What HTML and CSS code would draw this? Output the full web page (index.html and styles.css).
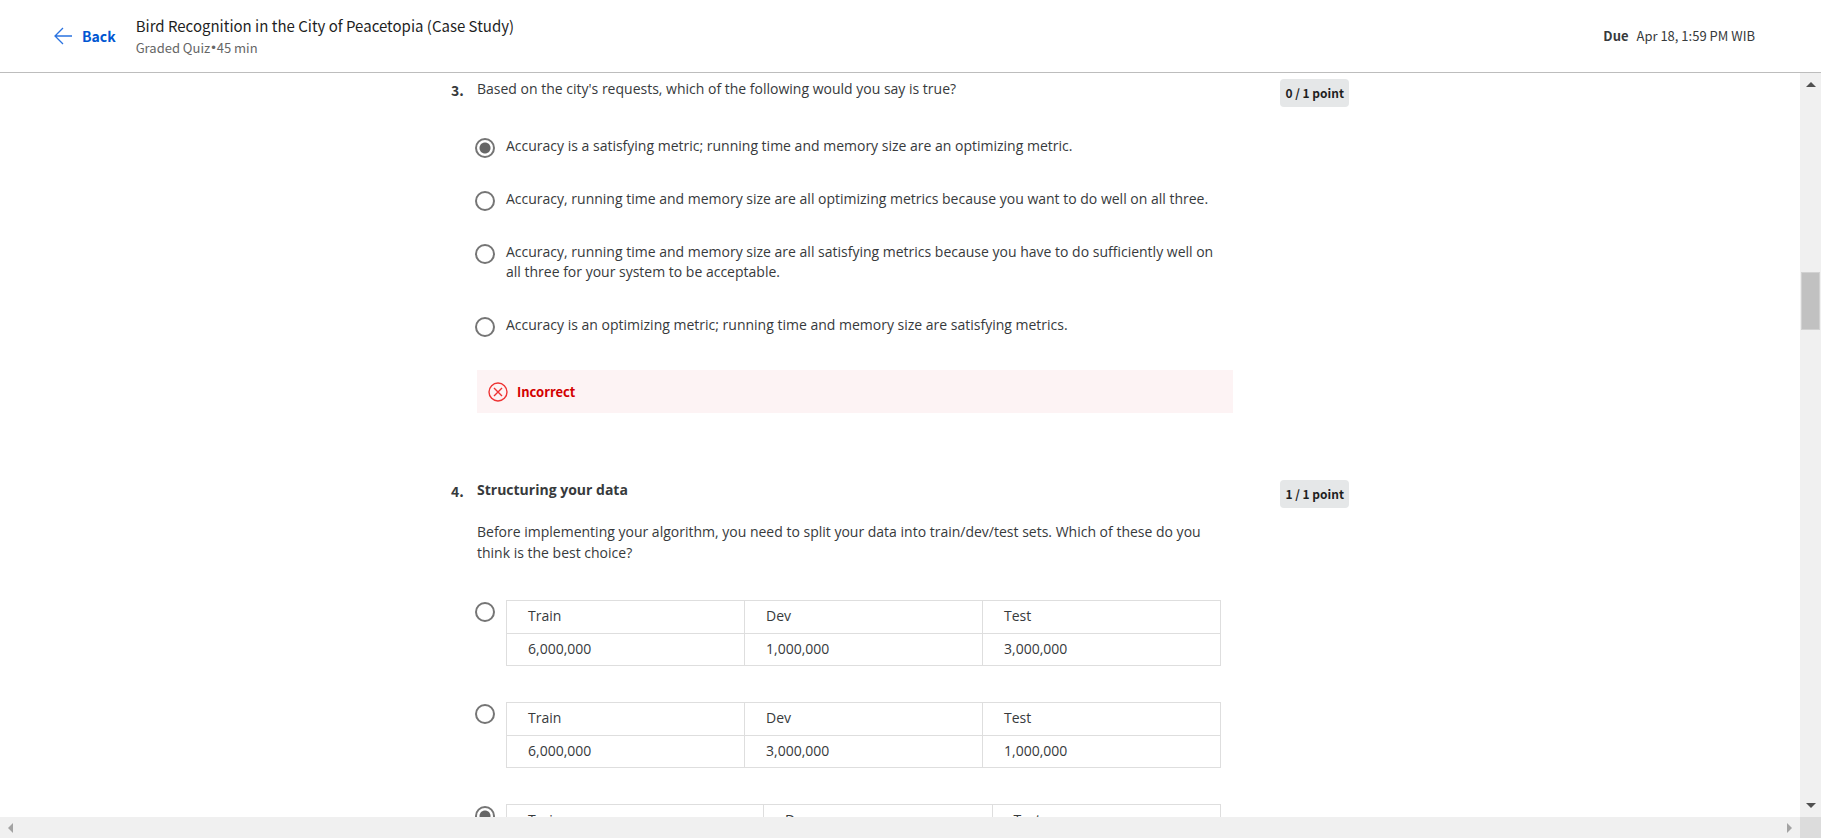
FILE: index.html
```html
<!DOCTYPE html>
<html lang="en">
<head>
<meta charset="utf-8">
<title>Bird Recognition in the City of Peacetopia (Case Study)</title>
<link rel="stylesheet" href="styles.css">
</head>
<body>
<header class="header">
  <a class="back" href="#">
    <svg class="back-icon" viewBox="0 0 18 18" aria-hidden="true"><path d="M18 9H1M9 1L1 9l8 8"/></svg>
    <span>Back</span>
  </a>
  <div class="heading">
    <h1 class="title">Bird Recognition in the City of Peacetopia (Case Study)</h1>
    <p class="subtitle"><span>Graded Quiz</span><span class="bullet">•</span><span>45 min</span></p>
  </div>
  <p class="due"><strong>Due</strong><span>Apr 18, 1:59 PM WIB</span></p>
</header>
<div class="viewport">
  <main class="page">
    <div class="quiz">
      <section class="question">
        <span class="number">3.</span>
        <div class="body">
          <p class="prompt">Based on the city's requests, which of the following would you say is true?</p>
          <div class="options">
            <label class="option"><input class="radio" type="radio" name="q3" checked><span>Accuracy is a satisfying metric; running time and memory size are an optimizing metric.</span></label>
            <label class="option"><input class="radio" type="radio" name="q3"><span>Accuracy, running time and memory size are all optimizing metrics because you want to do well on all three.</span></label>
            <label class="option"><input class="radio" type="radio" name="q3"><span>Accuracy, running time and memory size are all satisfying metrics because you have to do sufficiently well on all three for your system to be acceptable.</span></label>
            <label class="option"><input class="radio" type="radio" name="q3"><span>Accuracy is an optimizing metric; running time and memory size are satisfying metrics.</span></label>
          </div>
          <div class="feedback">
            <svg class="feedback-icon" viewBox="0 0 20 20" aria-hidden="true"><circle cx="10" cy="10" r="9"/><path d="M6 6l8 8M14 6l-8 8"/></svg>
            <strong>Incorrect</strong>
          </div>
        </div>
        <span class="points">0 / 1 point</span>
      </section>
      <section class="question">
        <span class="number">4.</span>
        <div class="body">
          <h2 class="prompt prompt-title">Structuring your data</h2>
          <p class="prompt">Before implementing your algorithm, you need to split your data into train/dev/test sets. Which of these do you think is the best choice?</p>
          <div class="options options-tables">
            <div class="option">
              <input class="radio" type="radio" name="q4" aria-labelledby="split-a">
              <table class="split" id="split-a">
                <tr><td>Train</td><td>Dev</td><td>Test</td></tr>
                <tr><td>6,000,000</td><td>1,000,000</td><td>3,000,000</td></tr>
              </table>
            </div>
            <div class="option">
              <input class="radio" type="radio" name="q4" aria-labelledby="split-b">
              <table class="split" id="split-b">
                <tr><td>Train</td><td>Dev</td><td>Test</td></tr>
                <tr><td>6,000,000</td><td>3,000,000</td><td>1,000,000</td></tr>
              </table>
            </div>
            <div class="option">
              <input class="radio" type="radio" name="q4" aria-labelledby="split-c" checked>
              <table class="split split-wide" id="split-c">
                <tr><td>Train</td><td>Dev</td><td>Test</td></tr>
              </table>
            </div>
          </div>
        </div>
        <span class="points">1 / 1 point</span>
      </section>
    </div>
  </main>
  <div class="bar bar-vertical">
    <svg class="arrow" viewBox="0 0 10 10" aria-hidden="true"><path d="M0 8l5-5 5 5z"/></svg>
    <div class="track"><div class="thumb"></div></div>
    <svg class="arrow" viewBox="0 0 10 10" aria-hidden="true"><path d="M0 2l5 5 5-5z"/></svg>
  </div>
  <div class="bar bar-horizontal">
    <svg class="arrow" viewBox="0 0 10 10" aria-hidden="true"><path d="M7 0L2 5l5 5z"/></svg>
    <svg class="arrow" viewBox="0 0 10 10" aria-hidden="true"><path d="M3 0l5 5-5 5z"/></svg>
  </div>
  <div class="corner"></div>
</div>
</body>
</html>
```
FILE: styles.css
```css
* { box-sizing: border-box; }
body {
  margin: 0;
  height: 100vh;
  display: flex;
  flex-direction: column;
  overflow: hidden;
  background: #fff;
  color: #373a3c;
  font: 14px/20px "Open Sans", sans-serif;
}
h1, h2, p { margin: 0; }

.header {
  flex: none;
  display: flex;
  align-items: center;
  height: 73px;
  padding: 0 66px 0 54px;
  border-bottom: 1px solid #bdbdbd;
  font-family: "Noto Sans CJK SC", sans-serif;
}
.back {
  display: flex;
  align-items: center;
  gap: 10px;
  color: #0056d2;
  font-size: 14px;
  font-weight: 700;
  text-decoration: none;
}
.back-icon { width: 18px; height: 18px; fill: none; stroke: #2a73e0; stroke-width: 1.3; }
.heading { flex: 1; margin-left: 20px; }
.title { font-size: 15px; line-height: 23px; font-weight: 400; color: #1f1f1f; }
.subtitle { display: flex; gap: 1px; font-size: 13px; line-height: 21px; color: #666; }
.bullet { font-family: "Liberation Sans", sans-serif; }
.due { display: flex; gap: 8px; font-size: 13px; color: #373a3c; }

.viewport {
  flex: 1;
  min-height: 0;
  display: grid;
  grid-template-columns: 1fr 21px;
  grid-template-rows: 1fr 21px;
}
.page { min-height: 0; overflow: hidden; padding: 5px 16px 0; }
.quiz { display: flex; flex-direction: column; gap: 66px; max-width: 898px; margin: 0 auto; }
.question { display: flex; align-items: flex-start; }
.number {
  width: 26px;
  padding-top: 2px;
  font-family: "Noto Sans CJK SC", sans-serif;
  font-size: 14px;
  font-weight: 700;
}
.body { width: 756px; }
.points {
  margin: 1px 0 0 auto;
  padding: 3px 5px;
  border-radius: 4px;
  background: #e5e7e8;
  color: #1f1f1f;
  font: 700 12px/22px "Noto Sans CJK SC", sans-serif;
}
.prompt { color: #373a3c; line-height: 21px; }
.prompt-title { margin-bottom: 21px; font-size: 14px; }
.options { display: flex; flex-direction: column; gap: 33px; padding: 37px 12px 0 0; }
.options-tables { gap: 36px; }
.option { display: flex; align-items: flex-start; gap: 11px; }
.radio {
  appearance: none;
  flex: none;
  width: 20px;
  height: 20px;
  margin: 2px 0 -2px -2px;
  border: 2px solid #757575;
  border-radius: 50%;
  background: #fff;
}
.radio:checked { background: radial-gradient(circle, #666 5px, #fff 6px); }
.feedback {
  display: flex;
  align-items: center;
  gap: 9px;
  height: 43px;
  margin-top: 35px;
  padding: 0 12px 0 11px;
  background: #fdf3f4;
  color: #d30001;
  font-family: "Noto Sans CJK SC", sans-serif;
  font-size: 13px;
}
.feedback-icon { width: 20px; height: 20px; fill: none; stroke: #e33; stroke-width: 1.4; }
.split { flex: 1; table-layout: fixed; border-collapse: collapse; }
.split td { height: 32px; padding: 0 21px 2px; border: 1px solid #dedede; }
.split tr:first-child td { height: 33px; }
.split-wide td:nth-child(1) { width: 36%; }
.split-wide td:nth-child(2) { width: 32%; }

.bar { display: flex; align-items: center; justify-content: space-between; background: #f0f0f0; }
.bar-vertical { flex-direction: column; padding: 6px 0; }
.bar-horizontal { padding: 0 6px; }
.arrow { flex: none; width: 10px; height: 10px; fill: #505050; }
.bar-horizontal .arrow { fill: #a3a3a3; }
.track { flex: 1; width: 100%; padding: 0 1px; display: flex; flex-direction: column; }
.track::before { content: ""; flex: 184; }
.track::after { content: ""; flex: 472; }
.thumb { flex: 56; background: #c1c1c1; border: 1px solid #d2d2d2; }
.corner { background: #dcdcdc; }
```
